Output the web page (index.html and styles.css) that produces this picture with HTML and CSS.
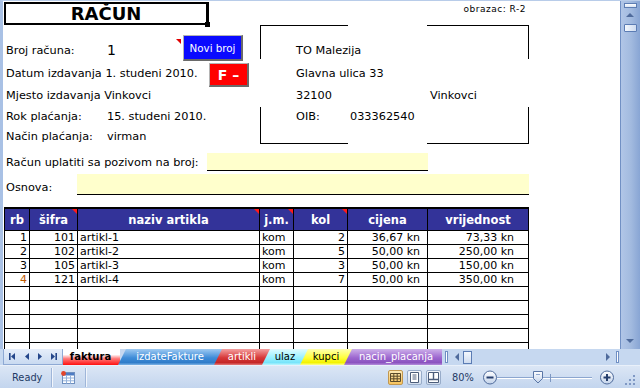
FILE: index.html
```html
<!doctype html>
<html lang="hr">
    <head>
        <meta charset="utf-8">
        <title>Račun - faktura</title>
        <meta name="viewport" content="width=device-width, initial-scale=1">
        <link rel="stylesheet" href="styles.css">
    </head>
    <body>
        <div class="app">
            <div class="main">
                <div class="sheet">
                    <div class="head">
                        <div class="title">RAČUN</div>
                        <div class="form-no">obrazac: R-2</div>
                    </div>

                    <div class="info">
                        <div class="fields">
                            <div class="line"><span class="lbl">Broj računa:</span><span class="num">1</span></div>
                            <div class="line">Datum izdavanja 1. studeni 2010.</div>
                            <div class="line">Mjesto izdavanja Vinkovci</div>
                            <div class="line"><span class="lbl">Rok plaćanja:</span>15. studeni 2010.</div>
                            <div class="line"><span class="lbl">Način plaćanja:</span>virman</div>
                            <span class="note note-num"></span>
                            <button class="btn btn-new" type="button">Novi broj</button>
                            <button class="btn btn-f" type="button">F –</button>
                        </div>
                        <div class="addr">
                            <div class="line">TO Malezija</div>
                            <div class="line">Glavna ulica 33</div>
                            <div class="line"><span class="zip">32100</span>Vinkovci</div>
                            <div class="line"><span class="oib">OIB:</span>033362540</div>
                        </div>
                    </div>

                    <div class="pay pay-ref">
                        <span class="pay-lbl">Račun uplatiti sa pozivom na broj:</span>
                        <span class="fill"></span>
                    </div>
                    <div class="pay pay-base">
                        <span class="pay-lbl">Osnova:</span>
                        <span class="fill"></span>
                    </div>

                    <table class="items">
                        <colgroup>
                            <col class="c-rb"><col class="c-sif"><col class="c-naz"><col class="c-jm"><col class="c-kol"><col class="c-cij"><col class="c-vri">
                        </colgroup>
                        <thead>
                            <tr>
                                <th>rb</th>
                                <th class="note-th">šifra</th>
                                <th class="note-th">naziv artikla</th>
                                <th class="note-th">j.m.</th>
                                <th class="note-th">kol</th>
                                <th>cijena</th>
                                <th>vrijednost</th>
                            </tr>
                        </thead>
                        <tbody>
                            <tr><td class="r">1</td><td class="r">101</td><td>artikl-1</td><td>kom</td><td class="r">2</td><td class="r price">36,67 kn</td><td class="r total">73,33 kn</td></tr>
                            <tr><td class="r">2</td><td class="r">102</td><td>artikl-2</td><td>kom</td><td class="r">5</td><td class="r price">50,00 kn</td><td class="r total">250,00 kn</td></tr>
                            <tr><td class="r">3</td><td class="r">105</td><td>artikl-3</td><td>kom</td><td class="r">3</td><td class="r price">50,00 kn</td><td class="r total">150,00 kn</td></tr>
                            <tr><td class="r odd">4</td><td class="r">121</td><td>artikl-4</td><td>kom</td><td class="r">7</td><td class="r price">50,00 kn</td><td class="r total">350,00 kn</td></tr>
                            <tr><td></td><td></td><td></td><td></td><td></td><td></td><td></td></tr>
                            <tr><td></td><td></td><td></td><td></td><td></td><td></td><td></td></tr>
                            <tr><td></td><td></td><td></td><td></td><td></td><td></td><td></td></tr>
                            <tr><td></td><td></td><td></td><td></td><td></td><td></td><td></td></tr>
                            <tr><td></td><td></td><td></td><td></td><td></td><td></td><td></td></tr>
                        </tbody>
                    </table>
                </div>

                <div class="vscroll">
                    <span class="split"></span>
                    <span class="arrow-up"></span>
                    <span class="thumb"></span>
                    <span class="grow"></span>
                    <span class="arrow-down"></span>
                </div>
            </div>

            <div class="tabrow">
                <div class="tabnav">
                    <svg width="58" height="15" viewBox="0 0 58 15">
                        <g fill="#24468a">
                            <rect x="5" y="4" width="1.6" height="7"/>
                            <polygon points="7,7.5 11,4 11,11"/>
                            <polygon points="21,7.5 25,4 25,11"/>
                            <polygon points="38,7.5 34,4 34,11"/>
                            <polygon points="51,7.5 47,4 47,11"/>
                            <rect x="51.4" y="4" width="1.6" height="7"/>
                        </g>
                    </svg>
                </div>
                <div class="tabs">
                    <span class="tab active">faktura</span>
                    <span class="tab t-blue">izdateFakture</span>
                    <span class="tab t-red">artikli</span>
                    <span class="tab t-cyan">ulaz</span>
                    <span class="tab t-yellow">kupci</span>
                    <span class="tab t-purple">nacin_placanja</span>
                </div>
                <div class="hscroll">
                    <span class="hsplit"></span>
                    <span class="arrow-left"></span>
                    <span class="hthumb"></span>
                    <span class="grow"></span>
                    <span class="arrow-right"></span>
                    <span class="hsplit end"></span>
                </div>
                <div class="corner"></div>
            </div>

            <div class="status">
                <span class="ready">Ready</span>
                <span class="sep"></span>
                <svg class="macro" width="16" height="15" viewBox="0 0 16 15">
                    <rect x="2.5" y="2.5" width="12" height="11" fill="#fff" stroke="#6e8fbf"/>
                    <rect x="3" y="3" width="11" height="2.5" fill="#4d7cc4"/>
                    <path d="M3 8h11M3 10.8h11M6.5 5.5v8M10.5 5.5v8" stroke="#93b2dc"/>
                    <circle cx="3.5" cy="3.5" r="2.4" fill="#e2452c"/>
                </svg>
                <span class="sep"></span>
                <span class="grow"></span>
                <div class="views">
                    <span class="view on">
                        <svg width="11" height="9" viewBox="0 0 11 9"><path d="M.5 .5h10v8h-10zM.5 3.2h10M.5 5.8h10M3.8 .5v8M7.2 .5v8" fill="none" stroke="#5a4a2a"/></svg>
                    </span>
                    <span class="view">
                        <svg width="9" height="11" viewBox="0 0 9 11"><path d="M.5 .5h8v10h-8z" fill="#fff" stroke="#4c5d7a"/><path d="M2.5 3h4M2.5 5h4M2.5 7h4" stroke="#4c5d7a"/></svg>
                    </span>
                    <span class="view">
                        <svg width="11" height="11" viewBox="0 0 11 11"><path d="M.5 .5h10v10h-10z" fill="#fff" stroke="#4c5d7a"/><path d="M1 7.5h9M5.5 1v6.5" stroke="#4c5d7a" stroke-width="1.4"/></svg>
                    </span>
                </div>
                <span class="zoom">80%</span>
                <svg class="slider" width="134" height="16" viewBox="0 0 134 16">
                    <defs>
                        <linearGradient id="knob" x1="0" y1="0" x2="0" y2="1">
                            <stop offset="0" stop-color="#ffffff"/>
                            <stop offset="1" stop-color="#c2d2ea"/>
                        </linearGradient>
                    </defs>
                    <path d="M15 8.5h95" stroke="#8ca6cf"/>
                    <path d="M15 9.5h95" stroke="#ffffff"/>
                    <path d="M68.5 5v8" stroke="#7d97c2"/>
                    <circle cx="8" cy="8.5" r="6.5" fill="url(#knob)" stroke="#506c9c"/>
                    <path d="M4.5 8.5h7" stroke="#263f6e" stroke-width="2"/>
                    <circle cx="125" cy="8.5" r="6.5" fill="url(#knob)" stroke="#506c9c"/>
                    <path d="M121.5 8.5h7M125 5v7" stroke="#263f6e" stroke-width="2"/>
                    <path d="M51.5 2.5h9v7l-4.5 4.5l-4.5-4.5z" fill="url(#knob)" stroke="#5a76a6"/>
                    <path d="M54 5.5h4" stroke="#8ea7cf"/>
                </svg>
                <svg class="grip" width="14" height="12" viewBox="0 0 14 12">
                    <g fill="#7f98c4">
                        <rect x="11" y="1" width="2" height="2"/>
                        <rect x="7" y="5" width="2" height="2"/><rect x="11" y="5" width="2" height="2"/>
                        <rect x="3" y="9" width="2" height="2"/><rect x="7" y="9" width="2" height="2"/><rect x="11" y="9" width="2" height="2"/>
                    </g>
                </svg>
            </div>
        </div>
    </body>
</html>
```

FILE: styles.css
```css
/* common */
html, body { margin: 0; }
body { font-family: "DejaVu Sans", sans-serif; font-size: 11.3px; color: #000; }
button { font-family: inherit; margin: 0; padding: 0; cursor: pointer; }
.grow { flex: 1; }

/* window */
.app { width: 640px; height: 388px; display: flex; flex-direction: column; overflow: hidden; background: #c6d8f0; }
.main { display: flex; height: 349px; box-sizing: border-box; border-top: 1px solid #b8cce9; border-left: 3px solid #a9c1e5; }
.sheet { flex: 1; position: relative; overflow: hidden; background: #fff; padding-left: 1px; }

/* title row */
.head { display: flex; justify-content: space-between; width: 524px; height: 24px; }
.title { position: relative; box-sizing: border-box; width: 205px; height: 23px; margin-top: 1px; border: 2px solid #000; border-right-width: 3px; font-size: 18px; font-weight: bold; line-height: 19px; text-align: center; }
.title::after { content: ""; position: absolute; right: -4px; bottom: -4px; width: 5px; height: 5px; background: #000; }
.form-no { padding: 3px 2px 0 0; font-size: 9px; letter-spacing: .5px; }

/* invoice data + buyer */
.info { display: flex; height: 120px; }
.fields { position: relative; width: 256px; box-sizing: border-box; padding-top: 14px; }
.addr { width: 269px; height: 119px; box-sizing: border-box; padding: 14px 0 0 34px;
    background:
        linear-gradient(#000, #000) left top / 88px 1px no-repeat,
        linear-gradient(#000, #000) right top / 102px 1px no-repeat,
        linear-gradient(#000, #000) left bottom / 88px 1px no-repeat,
        linear-gradient(#000, #000) right bottom / 102px 1px no-repeat,
        linear-gradient(#000, #000) left top / 1px 34px no-repeat,
        linear-gradient(#000, #000) right top / 1px 34px no-repeat,
        linear-gradient(#000, #000) left bottom / 1px 37px no-repeat,
        linear-gradient(#000, #000) right bottom / 1px 37px no-repeat;
}
.line { display: flex; align-items: center; padding-left: 2px; white-space: nowrap; }
.line:nth-child(1) { height: 22px; }
.line:nth-child(2) { height: 24px; }
.line:nth-child(3) { height: 21px; }
.line:nth-child(4) { height: 21px; }
.line:nth-child(5) { height: 18px; }
.lbl { width: 101px; }
.num { font-size: 14px; }
.zip { width: 134px; }
.oib { width: 54px; }

.note { position: absolute; width: 0; height: 0; border-top: 5px solid #e00000; border-left: 5px solid transparent; }
.note-num { left: 172px; top: 14px; }

.btn { position: absolute; box-sizing: border-box; color: #fff; border-style: solid; border-width: 1px 2px 2px 1px; border-color: #b4b4b4 #6a6a6a #6a6a6a #b4b4b4; }
.btn-new { left: 179px; top: 10px; width: 60px; height: 26px; background: #0a0aff; font-size: 10.3px; }
.btn-f { left: 205px; top: 38px; width: 40px; height: 24px; background: #ff0000; font-size: 14px; font-weight: bold; }

/* payment lines */
.pay { display: flex; }
.pay-lbl { display: flex; align-items: center; padding-left: 2px; white-space: nowrap; }
.fill { box-sizing: border-box; background: #ffffcc; border-bottom: 1px solid #000; }
.pay-ref { height: 18px; margin-top: 8px; }
.pay-ref .pay-lbl { width: 201px; }
.pay-ref .fill { width: 221px; }
.pay-base { height: 21px; margin-top: 3px; }
.pay-base .pay-lbl { width: 71px; padding-top: 5px; }
.pay-base .fill { width: 452px; }

/* items table */
.items { margin-top: 12px; width: 525px; table-layout: fixed; border-collapse: separate; border-spacing: 0; border-top: 2px solid #000; border-left: 1px solid #000; font-size: 11px; }
.c-rb { width: 25px; } .c-sif { width: 48px; } .c-naz { width: 182px; } .c-jm { width: 34px; }
.c-kol { width: 54px; } .c-cij { width: 80px; } .c-vri { width: 101px; }
.items th, .items td { padding: 0 2px; border-right: 1px solid #000; border-bottom: 1px solid #000; white-space: nowrap; overflow: hidden; }
.items thead tr { height: 22px; }
.items tbody tr { height: 14px; }
.items th { position: relative; background: #333399; color: #fff; font-size: 11.5px; font-weight: bold; line-height: 14px; }
.items td { line-height: 12px; }
.items .note-th::after { content: ""; position: absolute; top: 0; right: 0; border-top: 5px solid #ff1a1a; border-left: 5px solid transparent; }
.items .r { text-align: right; }
.items .price { padding-right: 7px; }
.items .total { padding-right: 14px; }
.items .odd { color: #c05a00; }

/* vertical scrollbar */
.vscroll { width: 20px; display: flex; flex-direction: column; align-items: center;
    background: linear-gradient(to right, #7190c4 0, #7190c4 1px, #b1c6e7 1px, #a2badf 55%, #88a5d4 100%); }
.split { width: 13px; height: 5px; margin-top: 2px; box-sizing: border-box; border: 1px solid #5d7db3; background: linear-gradient(#ffffff, #d8e3f3); }
.arrow-up { width: 0; height: 0; margin-top: 5px; border-left: 4px solid transparent; border-right: 4px solid transparent; border-bottom: 4px solid #4f6b9c; }
.thumb { width: 13px; height: 8px; margin-top: 7px; box-sizing: border-box; border: 1px solid #5b7cb4; border-radius: 1px; background: linear-gradient(to right, #f4f8fd, #cfdcf0); }
.arrow-down { width: 0; height: 0; margin-bottom: 6px; border-left: 4px solid transparent; border-right: 4px solid transparent; border-top: 4px solid #4f6b9c; }

/* sheet tabs */
.tabrow { display: flex; height: 16px; padding-left: 3px; background: #c6d8f0; }
.tabnav { width: 60px; box-sizing: border-box; border: 1px solid #8ea9d4; border-top: 0; background: linear-gradient(#e6eefa, #c9daf1); }
.tabnav svg { display: block; }
.tabs { display: flex; }
.tab { box-sizing: border-box; height: 16px; padding: 0 8px; margin-left: -8px; font-size: 10px; line-height: 15px; text-align: center; white-space: nowrap;
    clip-path: polygon(0 100%, 8px 0, 100% 0, 100% 100%); }
.tab.active { width: 57px; margin-left: 0; padding: 0 4px 0 2px; clip-path: none; font-weight: bold; color: #000;
    background: linear-gradient(#ffffff 0, #ffffff 35%, #ff7a7a 60%, #ff1010 100%); }
.t-blue { width: 104px; margin-left: -2px; color: #fff; background: linear-gradient(#9fcaf2, #3f8cd8 55%, #2f7cc9 85%, #7fb4e6); }
.t-red { width: 56px; color: #fff; background: linear-gradient(#f4a0a0, #d63838 55%, #c42626 85%, #e57c7c); }
.t-cyan { width: 46px; background: linear-gradient(#e0fcff, #98f0ff 55%, #78e4fa 85%, #bff6ff); }
.t-yellow { width: 52px; background: linear-gradient(#ffffb0, #ffff3a 55%, #f2f200 85%, #ffff90); }
.t-purple { width: 98px; padding-right: 2px; color: #fff; background: linear-gradient(#cdb0ea, #9c66cf 55%, #8b52bf 85%, #b48ddc); }

.hscroll { width: 178px; display: flex; align-items: center; }
.hsplit { width: 3px; height: 12px; margin-left: 3px; box-sizing: border-box; border: 1px solid #6f8fc4; background: #fff; }
.hsplit.end { margin: 0 1px 0 6px; }
.arrow-left { width: 0; height: 0; margin-left: 7px; border-top: 4px solid transparent; border-bottom: 4px solid transparent; border-right: 4px solid #4f6b9c; }
.hthumb { width: 9px; height: 13px; margin-left: 4px; box-sizing: border-box; border: 1px solid #5b7cb4; background: linear-gradient(#f4f8fd, #cfdcf0); }
.arrow-right { width: 0; height: 0; border-top: 4px solid transparent; border-bottom: 4px solid transparent; border-left: 4px solid #4f6b9c; }
.corner { width: 20px; }

/* status bar */
.status { display: flex; align-items: center; height: 23px; box-sizing: border-box; border-top: 1px solid #e9f0fa; background: linear-gradient(#dbe6f5, #c3d5ee); font-size: 9.8px; color: #1f3a64; }
.ready { width: 39px; margin-left: 12px; }
.sep { width: 1px; height: 19px; border-right: 1px solid #f2f6fc; background: #9fb6d9; }
.macro { margin: 0 9px 0 7px; }
.views { display: flex; gap: 4px; }
.view { display: flex; align-items: center; justify-content: center; width: 15px; height: 15px; box-sizing: border-box; border: 1px solid #98acc9; border-radius: 2px; background: linear-gradient(#f3f6fb, #d3deee); }
.view.on { border-color: #c2974f; background: linear-gradient(#fde9b4, #f8c45e); }
.zoom { width: 21px; margin-left: 11px; }
.slider { margin-left: 9px; }
.grip { margin: 6px 4px 0 6px; }
```
